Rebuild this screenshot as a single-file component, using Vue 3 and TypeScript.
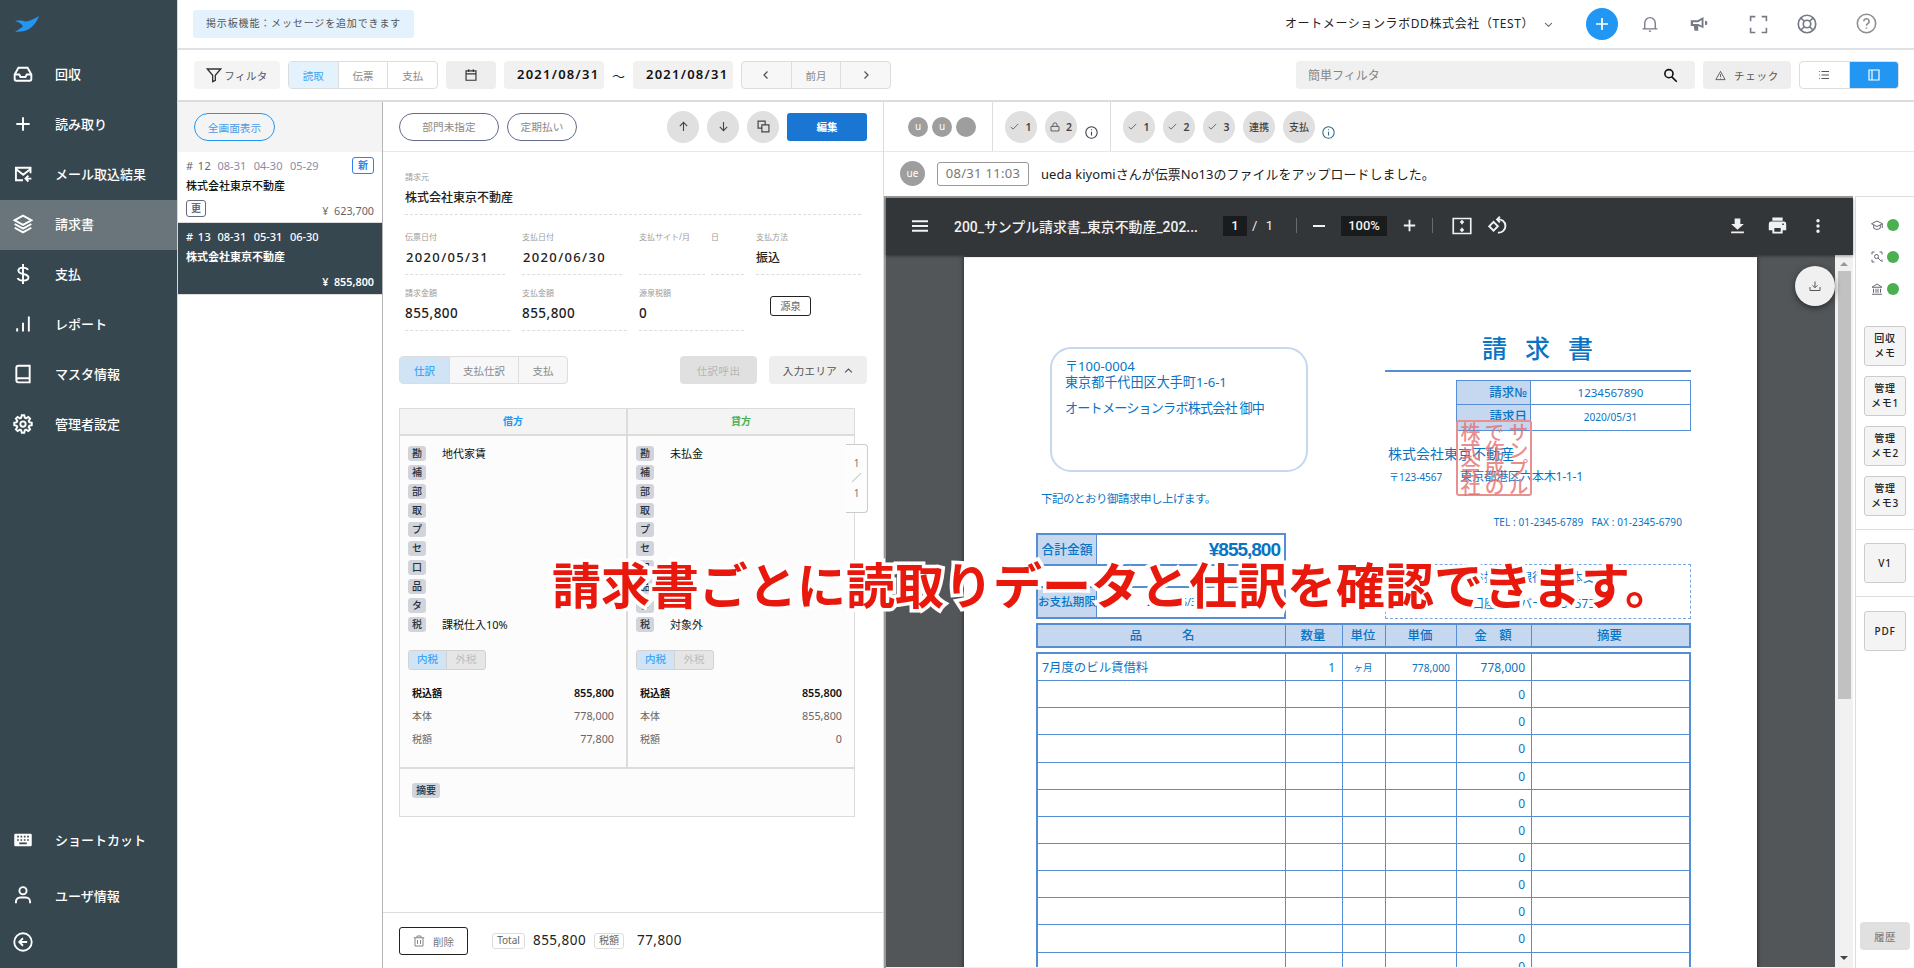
<script setup lang="ts">
import { h } from 'vue'

interface IconDef {
  d: string
  fill?: boolean
}

const icons: Record<string, IconDef> = {
  inbox: { d: 'M2 12.5h5.5l1.5 3h6l1.5-3H22M6.5 4.5h11L22 12.5V18a2 2 0 0 1-2 2H4a2 2 0 0 1-2-2v-5.500z' },
  plus: { d: 'M12 4v16M4 12h16' },
  mail: { d: 'M21 11V4.500H3.500V19.500H12M3.500 6l8.750 7L21 6M22 17.500h-6M18.500 14l-3.500 3.500 3.500 3.500' },
  layers: { d: 'M12 2l10 5.500-10 5.500L2 7.500zM2 12l10 5.500L22 12M2 16.500L12 22l10-5.500' },
  dollar: { d: 'M12 0v24M18 7C17 5 15 4.300 12 4.300c-3.500 0-5.500 1.300-5.500 3.700 0 5.300 12 2.700 12 8.200 0 2.300-2.500 3.700-6.500 3.700-3.500 0-5.500-1-6.500-3' },
  bars: { d: 'M5 21v-4M12 21V10.500M19 21V3' },
  book: { d: 'M20 17H6.500a2.500 2.500 0 0 0 0 5H20V2H6.500A2.500 2.500 0 0 0 4 4.500v15' },
  gear: { d: 'M12 8.800a3.200 3.200 0 1 0 0 6.400 3.200 3.200 0 0 0 0-6.400zM9.800 4.500L10.500 1.500h3l.7 3 1.500.7 2.700-1.700 2.100 2.100-1.700 2.700.7 1.500 3 .7v3l-3 .7-.7 1.500 1.700 2.700-2.100 2.100-2.700-1.700-1.500.7-.7 3h-3l-.7-3-1.500-.7-2.700 1.700-2.100-2.100 1.700-2.700-.7-1.500-3-.7v-3l3-.7.700-1.500L3.500 5.600l2.100-2.100 2.700 1.700z' },
  keyboard: { fill: true, d: 'M3 4.500h18a1.500 1.500 0 0 1 1.500 1.500v12a1.500 1.500 0 0 1-1.500 1.500H3A1.500 1.500 0 0 1 1.500 18V6A1.500 1.500 0 0 1 3 4.500zM5 7v2h2V7zm4 0v2h2V7zm4 0v2h2V7zm4 0v2h2V7zM5 11v2h2v-2zm4 0v2h2v-2zm4 0v2h2v-2zm4 0v2h2v-2zM7.500 15v2h9v-2z' },
  user: { d: 'M12 2.500a4.300 4.300 0 1 0 0 8.600 4.300 4.300 0 0 0 0-8.600zM3.500 22v-2a5 5 0 0 1 5-5h7a5 5 0 0 1 5 5v2' },
  back: { d: 'M12 1.500a10.500 10.500 0 1 0 0 21 10.500 10.500 0 0 0 0-21zM17 12H8M12 7.500L7.500 12l4.500 4.500' },
  funnel: { d: 'M2 3h20l-8 9.500V20l-4 2v-9.500z' },
  calendar: { d: 'M3.500 5h17v16h-17zM3.500 10h17M8 2v5M16 2v5' },
  left: { d: 'M15 5l-7 7 7 7' },
  right: { d: 'M9 5l7 7-7 7' },
  down: { d: 'M3 8l9 9 9-9' },
  up: { d: 'M3 17l9-9 9 9' },
  arrowUp: { d: 'M12 22V3M4 11l8-8 8 8' },
  arrowDown: { d: 'M12 2v19M4 13l8 8 8-8' },
  copy: { d: 'M9 9h13v13H9zM15 9V2H2v13h7' },
  bell: { d: 'M2 18.500h20M5 18V10.500a7 7 0 0 1 14 0V18M10.500 21.500h3' },
  horn: { fill: true, d: 'M1 7h9l8-4.500v15L11 14.500V21H6l-1-6.500H1zm3 2.500v2.500h7l4.500 2V6.500L11 9.500zM20 7.500l3 1v4l-3 1z' },
  expand: { d: 'M2 8V2h6M16 2h6v6M22 16v6h-6M8 22H2v-6' },
  ring: { d: 'M12 1.500a10.500 10.500 0 1 0 0 21 10.500 10.500 0 0 0 0-21zM12 7.500a4.500 4.500 0 1 0 0 9 4.500 4.500 0 0 0 0-9zM4.500 4.500L9 9M15 15l4.500 4.500M19.500 4.500L15 9M9 15l-4.500 4.500' },
  help: { d: 'M12 1.500a10.500 10.500 0 1 0 0 21 10.500 10.500 0 0 0 0-21zM9 9.500a3 3 0 1 1 4.300 2.700c-1 .5-1.300 1-1.300 2.300M12 16.500v1.500' },
  search: { d: 'M9.500 2.500a6.500 6.500 0 1 0 0 13 6.500 6.500 0 0 0 0-13zM14.500 14.500L22 22' },
  warn: { d: 'M12 3l10 18H2zM12 9v6M12 17v1.500' },
  list: { d: 'M7 5h15M7 12h15M7 19h15M2 5h1.500M2 12h1.500M2 19h1.500' },
  split: { d: 'M2 2h20v20H2zM8 2v20' },
  check: { d: 'M2 13l6 6L22 5' },
  lock: { d: 'M2.500 10.500h19v11h-19zM7 10V7a5 5 0 0 1 10 0v3' },
  info: { d: 'M12 1.500a10.500 10.500 0 1 0 0 21 10.500 10.500 0 0 0 0-21zM12 10.500v7M12 6v2' },
  trash: { d: 'M1.500 5.500h21M4 6v16h16V6M8 5V2h8v3M9 10v8M15 10v8' },
  menu: { fill: true, d: 'M0 3.500h24v3H0zM0 10.500h24v3H0zM0 17.500h24v3H0z' },
  fit: { d: 'M1.500 3h21v18h-21z M12 6v4M12 14v4M10 8l2-2 2 2M10 16l2 2 2-2' },
  rotate: { d: 'M7 7.500l5.500 5.500L7 18.500 1.500 13zM11.500 4.500c5.500-1 10.500 2.500 10.500 8 0 5-4 9-9.500 8.500M15 1l-3.500 3.500L15 8' },
  download: { fill: true, d: 'M8 2h8v8h5l-9 8-9-8h5zM3 20.500h18V23H3z' },
  print: { fill: true, d: 'M5.500 2h13v4h-13zM4 7h16a3 3 0 0 1 3 3v8h-4.500v4h-13v-4H1v-8a3 3 0 0 1 3-3zm4 8v5h8v-5zM18 9.500v2h2v-2z' },
  dots: { fill: true, d: 'M12 1.500a2.600 2.600 0 1 0 0 5.200 2.600 2.600 0 0 0 0-5.200zM12 9.400a2.600 2.600 0 1 0 0 5.200 2.600 2.600 0 0 0 0-5.200zM12 17.300a2.600 2.600 0 1 0 0 5.200 2.600 2.600 0 0 0 0-5.200z' },
  tray: { d: 'M2 14v7h20v-7M12 3v12M7 10.500l5 5 5-5' },
  cap: { d: 'M1 9.500l11-5.500 11 5.500-11 5.500zM5.500 12v6.500c4 3 9 3 13 0V12M22.500 10v8' },
  scan: { d: 'M2 7V2h5M17 2h5v5M7 22H2v-5M22 17v5M11 7a4 4 0 1 0 0 8 4 4 0 0 0 0-8zM14 14l6 6' },
  bank: { d: 'M2 8.500L12 2l10 6.500zM2 22.500h20M5 11.500v8M10 11.500v8M14 11.500v8M19 11.500v8' }
}

// Small icon renderer on a 24 unit grid
const Icon = (props: { name: string; size?: number; weight?: number }) => {
  const def = icons[props.name]
  const size = props.size ?? 16
  return h('svg', {
    viewBox: '0 0 24 24',
    width: size,
    height: size,
    fill: def.fill ? 'currentColor' : 'none',
    'fill-rule': 'evenodd',
    stroke: def.fill ? 'none' : 'currentColor',
    'stroke-width': props.weight ?? 2
  }, [h('path', { d: def.d })])
}
Icon.props = ['name', 'size', 'weight']

const menu = [
  { icon: 'inbox', label: '回収' },
  { icon: 'plus', label: '読み取り' },
  { icon: 'mail', label: 'メール取込結果' },
  { icon: 'layers', label: '請求書', active: true },
  { icon: 'dollar', label: '支払' },
  { icon: 'bars', label: 'レポート' },
  { icon: 'book', label: 'マスタ情報' },
  { icon: 'gear', label: '管理者設定' }
]

const slips = [
  { no: '12', dates: ['08-31', '04-30', '05-29'], name: '株式会社東京不動産', price: '623,700', isNew: true, updated: true },
  { no: '13', dates: ['08-31', '05-31', '06-30'], name: '株式会社東京不動産', price: '855,800', selected: true }
]

const tagNames = ['勘', '補', '部', '取', 'プ', 'セ', '口', '品', 'タ', '税']

const sides = [
  { account: '地代家賃', tax: '課税仕入10%', total: '855,800', base: '778,000', taxAmount: '77,800' },
  { account: '未払金', tax: '対象外', total: '855,800', base: '855,800', taxAmount: '0' }
]

const tagValue = (side: (typeof sides)[number], tag: string) => {
  if (tag === '勘') return side.account
  if (tag === '税') return side.tax
  return ''
}

const memos = [['回収', 'メモ'], ['管理', 'メモ1'], ['管理', 'メモ2'], ['管理', 'メモ3']]
const stampColumns = ['株式会社', 'で作成の', 'サンプル']
const emptyRows = 11
</script>

<template>
  <div class="app">
    <nav class="sidebar">
      <div class="logo">
        <svg width="26" height="18" viewBox="0 0 26 18">
          <path d="M25 1C22 9 16 16 7 16.500L1 17l8-5.500C8 9 5 7 1 6c5-1 8 0 11 .5C17 6 21 3 25 1z" fill="#2196f3" />
        </svg>
      </div>
      <a v-for="item in menu" :key="item.label" class="nav-item" :class="{ active: item.active }">
        <Icon :name="item.icon" :size="20" :weight="2.3" /><span>{{ item.label }}</span>
      </a>
      <div class="nav-bottom">
        <a class="nav-item shortcut"><Icon name="keyboard" :size="20" /><span>ショートカット</span></a>
        <a class="nav-item user"><Icon name="user" :size="20" :weight="2.3" /><span>ユーザ情報</span></a>
        <a class="nav-item fold"><Icon name="back" :size="20" :weight="2.2" /></a>
      </div>
    </nav>

    <div class="content">
      <header class="header">
        <div class="notice">掲示板機能：メッセージを追加できます</div>
        <div class="company">オートメーションラボDD株式会社（TEST）</div>
        <Icon class="company-arrow" name="down" :size="9" :weight="2.8" />
        <div class="add"><Icon name="plus" :size="18" :weight="2.3" /></div>
        <Icon class="h-bell" name="bell" :size="18" :weight="1.8" />
        <Icon class="h-horn" name="horn" :size="18" />
        <Icon class="h-expand" name="expand" :size="19" />
        <Icon class="h-ring" name="ring" :size="20" />
        <Icon class="h-help" name="help" :size="21" :weight="1.8" />
      </header>

      <div class="toolbar">
        <button class="btn filter"><Icon name="funnel" :size="16" />フィルタ</button>
        <div class="group">
          <button class="on">読取</button><button>伝票</button><button>支払</button>
        </div>
        <button class="btn cal"><Icon name="calendar" :size="14" /></button>
        <div class="date">2021/08/31</div>
        <span class="tilde">～</span>
        <div class="date">2021/08/31</div>
        <div class="group pager">
          <button><Icon name="left" :size="12" :weight="2.6" /></button><button>前月</button><button><Icon name="right" :size="12" :weight="2.6" /></button>
        </div>
        <div class="search"><span>簡単フィルタ</span><Icon name="search" :size="15" :weight="2.6" /></div>
        <button class="btn alert"><Icon name="warn" :size="11" />チェック</button>
        <div class="group view">
          <button><Icon name="list" :size="12" /></button><button class="primary"><Icon name="split" :size="12" :weight="2.400" /></button>
        </div>
      </div>

      <main class="main">
        <section class="slip-list">
          <div class="list-head"><button class="pill blue">全画面表示</button></div>
          <div v-for="slip in slips" :key="slip.no" class="slip" :class="{ selected: slip.selected }">
            <div class="slip-top">
              <span class="no"># {{ slip.no }}</span>
              <span v-for="date in slip.dates" :key="date" class="slip-date">{{ date }}</span>
              <span v-if="slip.isNew" class="mark new">新</span>
            </div>
            <div class="slip-name">{{ slip.name }}</div>
            <div class="slip-foot">
              <span v-if="slip.updated" class="mark">更</span>
              <span class="price">¥&nbsp; {{ slip.price }}</span>
            </div>
          </div>
        </section>

        <section class="detail">
          <div class="detail-head">
            <button class="pill dept">部門未指定</button>
            <button class="pill regular">定期払い</button>
            <div class="round first"><Icon name="arrowUp" :size="11" :weight="2.400" /></div>
            <div class="round"><Icon name="arrowDown" :size="11" :weight="2.400" /></div>
            <div class="round"><Icon name="copy" :size="13" :weight="2.200" /></div>
            <button class="edit">編集</button>
          </div>

          <div class="fields">
            <div class="field vendor"><label>請求元</label><b>株式会社東京不動産</b></div>
            <div class="field-row">
              <div class="field w100 ymd"><label>伝票日付</label><b>2020/05/31</b></div>
              <div class="field w100 ymd"><label>支払日付</label><b>2020/06/30</b></div>
              <div class="field w66"><label>支払サイト/月</label></div>
              <div class="field w33"><label>日</label></div>
              <div class="field w105"><label>支払方法</label><b>振込</b></div>
            </div>
            <div class="field-row second">
              <div class="field w105"><label>請求金額</label><b>855,800</b></div>
              <div class="field w105"><label>支払金額</label><b>855,800</b></div>
              <div class="field w105"><label>源泉税額</label><b>0</b></div>
              <button class="withhold">源泉</button>
            </div>
          </div>

          <div class="tabs">
            <div class="group journal">
              <button class="on">仕訳</button><button class="wide">支払仕訳</button><button>支払</button>
            </div>
            <button class="btn recall">仕訳呼出</button>
            <button class="btn area">入力エリア<Icon name="up" :size="9" :weight="3" /></button>
          </div>

          <div class="ledger">
            <div class="ledger-head"><span class="debit">借方</span><span class="credit">貸方</span></div>
            <div class="ledger-body">
              <div v-for="side in sides" :key="side.account" class="side">
                <div v-for="tag in tagNames" :key="tag" class="tag-row">
                  <span class="tag">{{ tag }}</span><span class="value">{{ tagValue(side, tag) }}</span>
                </div>
                <div class="tax-toggle"><span class="on">内税</span><span>外税</span></div>
                <div class="sum strong"><span>税込額</span><span>{{ side.total }}</span></div>
                <div class="sum"><span>本体</span><span>{{ side.base }}</span></div>
                <div class="sum"><span>税額</span><span>{{ side.taxAmount }}</span></div>
              </div>
            </div>
            <div class="ledger-foot"><span class="tag">摘要</span></div>
            <div class="page-tab"><span>1</span><span>／</span><span>1</span></div>
          </div>

          <div class="detail-foot">
            <button class="delete"><Icon name="trash" :size="12" :weight="1.800" />削除</button>
            <span class="chip total">Total</span><span class="amount">855,800</span>
            <span class="chip">税額</span><span class="amount tax">77,800</span>
          </div>
        </section>

        <section class="file">
          <div class="approval">
            <div class="users"><i>u</i><i>u</i><i></i></div>
            <div class="steps a">
              <div class="round"><Icon name="check" :size="9" />1</div>
              <div class="round"><Icon name="lock" :size="10" />2</div>
              <Icon class="info" name="info" :size="13" />
            </div>
            <div class="steps b">
              <div v-for="n in 3" :key="n" class="round"><Icon name="check" :size="9" />{{ n }}</div>
              <div class="round text">連携</div>
              <div class="round text">支払</div>
              <Icon class="info blue" name="info" :size="13" />
            </div>
          </div>
          <div class="log">
            <i>ue</i>
            <span class="time">08/31 11:03</span>
            <span>ueda kiyomiさんが伝票No13のファイルをアップロードしました。</span>
          </div>

          <div class="file-body">
            <div class="viewer">
              <div class="pdf-bar">
                <Icon name="menu" :size="16" />
                <span class="pdf-title">200_サンプル請求書_東京不動産_202...</span>
                <span class="box page-no">1</span><span class="pages">/&nbsp; 1</span>
                <s></s>
                <span class="minus"></span>
                <span class="box zoom">100%</span>
                <Icon class="zoom-in" name="plus" :size="17" :weight="2.600" />
                <s class="second"></s>
                <Icon class="fit" name="fit" :size="20" />
                <Icon class="rotate" name="rotate" :size="19" :weight="2.400" />
                <Icon class="dl" name="download" :size="17" />
                <Icon class="print" name="print" :size="19" />
                <Icon class="more" name="dots" :size="16" />
              </div>
              <div class="pdf-area">
                <div class="page">
                  <div class="inv-top">
                    <div>
                      <div class="address">
                        <p>〒100-0004</p>
                        <p>東京都千代田区大手町1-6-1</p>
                        <p class="to">オートメーションラボ株式会社 御中</p>
                      </div>
                      <p class="lead">下記のとおり御請求申し上げます。</p>
                    </div>
                    <div class="issuer">
                      <div class="inv-title">請求書</div>
                      <div class="inv-no">
                        <span class="th">請求№</span><span class="num">1234567890</span>
                        <span class="th">請求日</span><span>2020/05/31</span>
                      </div>
                      <p class="from">株式会社東京不動産</p>
                      <p class="from-addr"><span>〒123-4567</span>東京都港区六本木1-1-1</p>
                      <p class="tel">TEL : 01-2345-6789&nbsp;&nbsp; FAX : 01-2345-6790</p>
                      <div class="stamp">
                        <span v-for="column in stampColumns" :key="column">{{ column }}</span>
                      </div>
                    </div>
                  </div>
                  <div class="inv-mid">
                    <div>
                      <div class="pay sum-total"><span class="th">合計金額</span><b>¥855,800</b></div>
                      <div class="pay due"><span class="th">お支払期限</span><span class="due-date">2020/06/30</span></div>
                    </div>
                    <div class="bank">
                      <p>お振込先銀行 東京本支店</p>
                      <p>口座ナンバー 1234575</p>
                    </div>
                  </div>
                  <div class="grid head">
                    <span class="goods">品　　名</span><span>数量</span><span>単位</span><span>単価</span><span>金　額</span><span>摘要</span>
                  </div>
                  <div class="lines">
                    <div class="grid">
                      <span>7月度のビル賃借料</span><span class="r qty">1</span><span class="c">ヶ月</span><span class="r small">778,000</span><span class="r">778,000</span><span></span>
                    </div>
                    <div v-for="n in emptyRows" :key="n" class="grid">
                      <span></span><span></span><span></span><span></span><span class="r">0</span><span></span>
                    </div>
                  </div>
                </div>
                <div class="scroll"><em class="tri-up"></em><em class="thumb"></em><em class="tri-down"></em></div>
                <div class="fab"><Icon name="tray" :size="12" /></div>
              </div>
            </div>

            <aside class="rail">
              <div v-for="name in ['cap', 'scan', 'bank']" :key="name" class="state"><Icon :name="name" :size="12" /><i></i></div>
              <div class="memos">
                <button v-for="memo in memos" :key="memo.join('')" class="memo">{{ memo[0] }}<br>{{ memo[1] }}</button>
              </div>
              <div class="rail-box"><button class="memo">V1</button></div>
              <div class="rail-box last"><button class="memo">PDF</button></div>
              <button class="btn history">履歴</button>
            </aside>
          </div>
        </section>
      </main>
    </div>

    <div class="caption">請求書ごとに読取りデータと仕訳を確認できます。</div>
  </div>
</template>

<style>
body {
  margin: 0;
  overflow: hidden;
}
</style>

<style scoped>
.app {
  position: relative;
  display: flex;
  width: 1914px;
  height: 968px;
  overflow: hidden;
  background: #fff;
  color: #212121;
  font-family: "Noto Sans", "Noto Sans CJK JP", sans-serif;
  font-size: 12px;
}

.app * {
  box-sizing: border-box;
}

svg {
  display: block;
  flex: none;
}

p {
  margin: 0;
}

i {
  font-style: normal;
}

button {
  padding: 0;
  border: 0;
  font: inherit;
  color: inherit;
  background: none;
}

/* Sidebar */
.sidebar {
  display: flex;
  flex-direction: column;
  flex: none;
  width: 178px;
  background: #37474f;
  border-right: 1px solid #d5d9db;
  color: #fff;
}

.logo {
  height: 50px;
  padding: 15px 0 0 14px;
}

.nav-item {
  display: flex;
  align-items: center;
  gap: 22px;
  height: 50px;
  padding: 0 0 2px 13px;
  font-size: 13px;
  font-weight: 500;
}

.nav-item span {
  padding-bottom: 2px;
}

.nav-item.active {
  background: #69757a;
}

.nav-bottom {
  margin-top: auto;
  padding-bottom: 5px;
}

.nav-bottom .shortcut {
  height: 56px;
}

.nav-bottom .user {
  height: 54px;
}

.nav-bottom .user span {
  padding-top: 2px;
}

.nav-bottom .fold {
  height: 40px;
}

.content {
  display: flex;
  flex-direction: column;
  flex: 1;
}

/* Header */
.header {
  display: flex;
  align-items: center;
  height: 50px;
  padding: 0 43px 0 15px;
  border-bottom: 2px solid #dfe1e6;
  color: #757a85;
}

.notice {
  width: 221px;
  height: 28px;
  padding-left: 13px;
  border-radius: 3px;
  background: #e3f2fd;
  color: #555;
  font-size: 10px;
  line-height: 26px;
  letter-spacing: 0.85px;
}

.company {
  margin-left: auto;
  width: 250px;
  padding-bottom: 2px;
  color: #222;
  letter-spacing: 0.6px;
  white-space: nowrap;
}

.company-arrow {
  margin-left: 9px;
  color: #555;
}

.add {
  display: flex;
  align-items: center;
  justify-content: center;
  width: 32px;
  height: 32px;
  margin-left: 33px;
  border-radius: 50%;
  background: #2196f3;
  color: #fff;
}

.h-bell {
  margin-left: 23px;
}

.h-horn {
  margin-left: 31px;
}

.h-expand {
  margin-left: 41px;
}

.h-ring {
  margin-left: 29px;
}

.h-help {
  margin: -2px -6px 0 39px;
  color: #8e8e8e;
}

/* Toolbar */
.toolbar {
  display: flex;
  align-items: center;
  gap: 8px;
  height: 52px;
  padding: 0 15px 0 16px;
  border-bottom: 2px solid #dcdcdc;
}

.btn {
  display: flex;
  align-items: center;
  justify-content: center;
  height: 28px;
  border-radius: 4px;
  background: #f4f4f4;
  color: #555;
  font-size: 10.500px;
  letter-spacing: 0.4px;
}

.filter {
  width: 86px;
  gap: 2px;
}

.filter svg {
  color: #333;
}

.group {
  display: flex;
  width: 150px;
  height: 28px;
  overflow: hidden;
  border: 1px solid #ddd;
  border-radius: 4px;
}

.group button {
  display: flex;
  align-items: center;
  justify-content: center;
  flex: 1;
  color: #8a8a8a;
  font-size: 10.500px;
}

.group button + button {
  border-left: 1px solid #ddd;
}

.group .on {
  background: #e3f2fd;
  color: #42a5f5;
}

.group svg {
  color: #555;
}

.cal {
  width: 50px;
  background: #eee;
  color: #333;
}

.date {
  width: 100px;
  height: 28px;
  padding-left: 13px;
  border-radius: 4px;
  background: #f1f1f1;
  color: #111;
  font-size: 13px;
  font-weight: 600;
  line-height: 27px;
  letter-spacing: 1.250px;
  white-space: nowrap;
}

.tilde {
  width: 13px;
  font-size: 13px;
}

.pager {
  background: #f7f7f7;
}

.search {
  display: flex;
  align-items: center;
  justify-content: space-between;
  width: 399px;
  height: 28px;
  margin-left: auto;
  padding: 0 17px 0 12px;
  border-radius: 4px;
  background: #f0f0f0;
  color: #858585;
}

.search svg {
  color: #111;
}

.alert {
  width: 88px;
  gap: 8px;
  background: #eee;
  letter-spacing: 0.8px;
}

.view {
  width: 100px;
}

.group .primary {
  background: #2196f3;
}

.group .primary svg {
  color: #fff;
}

.main {
  display: flex;
  height: 866px;
}

/* Slip list */
.slip-list {
  width: 205px;
  border-right: 1px solid #b5b5b5;
}

.list-head {
  height: 50px;
  padding: 11px 16px;
  background: #f4f4f4;
}

.pill {
  width: 81px;
  height: 28px;
  border: 1px solid #656b8c;
  border-radius: 14px;
  color: #8a8a8a;
  font-size: 10.700px;
}

.pill.blue {
  border-color: #2196f3;
  color: #4d9be8;
}

.slip {
  height: 71px;
  padding: 4px 8px;
  border-bottom: 1px solid #ddd;
  font-size: 11px;
}

.slip-top {
  display: flex;
  align-items: center;
  gap: 7.500px;
  height: 18px;
  color: #8a8ca5;
  font-size: 11px;
}

.slip-top .no {
  width: 24px;
  color: #666;
  letter-spacing: 0.4px;
  word-spacing: 1px;
  white-space: nowrap;
}

.mark {
  width: 20px;
  height: 17px;
  border: 1px solid #656b7c;
  border-radius: 3px;
  color: #656b7c;
  font-size: 10px;
  font-weight: 700;
  line-height: 14px;
  text-align: center;
}

.mark.new {
  width: 22px;
  margin-left: auto;
  border-color: #2f80f0;
  color: #2f80f0;
}

.slip-name {
  height: 26px;
  color: #111;
  font-weight: 500;
  line-height: 24px;
}

.slip-foot {
  display: flex;
  align-items: center;
  height: 17px;
  color: #666;
}

.price {
  margin-left: auto;
  font-size: 10.800px;
  padding-top: 3px;
}

.slip.selected {
  height: 72px;
  background: #37474f;
}

.slip.selected * {
  color: #fff;
  font-weight: 600;
}

.slip.selected .slip-date,
.slip.selected .no {
  font-weight: 500;
}

/* Detail */
.detail {
  display: flex;
  flex-direction: column;
  width: 501px;
  border-right: 1px solid #ddd;
}

.detail-head {
  display: flex;
  align-items: center;
  gap: 8px;
  height: 50px;
  padding: 0 16px;
  border-bottom: 1px solid #e8e8e8;
}

.dept {
  width: 100px;
}

.regular {
  width: 70px;
}

.round {
  display: flex;
  align-items: center;
  justify-content: center;
  gap: 6px;
  width: 32px;
  height: 32px;
  border-radius: 50%;
  background: #e0e0e0;
  color: #444;
  font-size: 10.500px;
  font-weight: 600;
}

.round.first {
  margin-left: auto;
}

.edit {
  width: 80px;
  height: 28px;
  border-radius: 3px;
  background: #1976d2;
  color: #fff;
  font-size: 10.500px;
  font-weight: 700;
}

.fields {
  padding: 17px 22px 0;
}

.field {
  display: flex;
  flex-direction: column;
  height: 46px;
  border-bottom: 1px dashed #ddd;
}

.field label {
  height: 17px;
  color: #9b9b9b;
  font-size: 8px;
  line-height: 16px;
  white-space: nowrap;
}

.field b {
  font-size: 12px;
  font-weight: 500;
  line-height: 23px;
  letter-spacing: 0;
}

.field.ymd b {
  padding-left: 1px;
  font-size: 13px;
  line-height: 22px;
  letter-spacing: 1.350px;
}

.field-row {
  display: flex;
  height: 60px;
  align-items: flex-end;
}

.field-row.second {
  height: 56px;
}

.field-row.second b {
  font-size: 13.500px;
  line-height: 22px;
  letter-spacing: 0.450px;
}

.w100 {
  width: 100px;
  margin-right: 17px;
}

.w66 {
  width: 66px;
  margin-right: 6px;
}

.w33 {
  width: 33px;
  margin-right: 12px;
}

.w105 {
  width: 105px;
}

.second .w105 {
  margin-right: 12px;
}

.withhold {
  width: 41px;
  height: 20px;
  margin: 0 0 15px 14px;
  border: 1px solid #222;
  border-radius: 3px;
  color: #666;
  font-size: 10.300px;
  line-height: 16px;
}

.tabs {
  display: flex;
  gap: 20px;
  margin-top: 25px;
  padding: 0 16px;
}

.journal {
  width: 169px;
  margin-right: auto;
  background: #f7f7f7;
}

.journal button {
  flex: none;
  width: 49px;
}

.journal .wide {
  width: 69px;
}

.journal .on,
.tax-toggle .on {
  background: #d0e4f5;
  color: #42a5f5;
  font-weight: 500;
}

.recall {
  width: 77px;
  margin-right: 0;
  background: #e0e0e0;
  color: #b5b5b5;
}

.area {
  width: 98px;
  margin-left: -8px;
  gap: 7px;
  background: #eee;
}

.ledger {
  position: relative;
  width: 456px;
  height: 409px;
  margin: 24px 0 0 16px;
  border: 1px solid #dcdcdc;
  background: #fcfcfc;
}

.ledger-head {
  display: flex;
  height: 27px;
  border-bottom: 2px solid #dcdcdc;
  background: #f4f4f4;
  font-size: 10px;
  font-weight: 700;
  line-height: 24px;
  text-align: center;
}

.ledger-head span {
  flex: 1;
}

.debit {
  border-right: 1px solid #dcdcdc;
  color: #2196f3;
}

.credit {
  border-left: 1px solid #dcdcdc;
  color: #4caf50;
}

.ledger-body {
  display: flex;
  height: 333px;
  border-bottom: 2px solid #dcdcdc;
}

.side {
  flex: 1;
  padding: 8px 12px 0 8px;
}

.side:first-child {
  border-right: 2px solid #dcdcdc;
}

.tag-row {
  display: flex;
  align-items: center;
  gap: 16px;
  height: 19px;
  color: #111;
  font-size: 11px;
}

.value {
  padding-bottom: 2px;
}

.tag {
  width: 18px;
  height: 15px;
  border-radius: 3px;
  background: #d1d5db;
  color: #263040;
  font-size: 10px;
  font-weight: 500;
  line-height: 14px;
  text-align: center;
}

.tax-toggle {
  display: flex;
  width: 78px;
  height: 20px;
  margin: 16px 0 11px;
  overflow: hidden;
  border: 1px solid #d2d2d2;
  border-radius: 3px;
  background: #e6e6e6;
  color: #bdbdbd;
  font-size: 10.500px;
  line-height: 17px;
  text-align: center;
}

.tax-toggle span {
  flex: 1;
}

.tax-toggle .on {
  flex: none;
  width: 38px;
  border-right: 1px solid #d2d2d2;
}

.sum {
  display: flex;
  align-items: center;
  justify-content: space-between;
  height: 23px;
  padding-left: 4px;
  color: #666;
  font-size: 10px;
}

.sum span + span {
  font-size: 10.800px;
}

.sum.strong {
  color: #111;
  font-weight: 600;
}

.ledger-foot {
  display: flex;
  padding: 14px 12px;
}

.ledger-foot .tag {
  width: 28px;
}

/* Sticks out over the right edge of the ledger */
.page-tab {
  position: absolute;
  top: 35px;
  right: -14px;
  width: 22px;
  height: 69px;
  padding-top: 11px;
  border: 1px solid #ccc;
  border-left: 0;
  border-radius: 0 4px 4px 0;
  background: #fdfdfd;
  color: #777;
  font-size: 10px;
  line-height: 15px;
}

.page-tab span {
  display: block;
  text-align: center;
}

.detail-foot {
  display: flex;
  align-items: center;
  height: 56px;
  margin-top: auto;
  padding: 1px 16px 0;
  border-top: 1px solid #ddd;
}

.delete {
  display: flex;
  align-items: center;
  justify-content: center;
  gap: 8px;
  width: 69px;
  height: 28px;
  margin-right: 24px;
  border: 1px solid #222;
  border-radius: 3px;
  color: #777;
  font-size: 10.500px;
}

.chip {
  width: 30px;
  height: 16px;
  border: 1px solid #ddd;
  border-radius: 3px;
  color: #666;
  font-size: 10px;
  line-height: 13px;
  text-align: center;
}

.chip.total {
  width: 33px;
}

.amount {
  width: 61px;
  padding: 0 0 2px 8px;
  font-size: 13.500px;
  letter-spacing: 0.450px;
}

.amount + .chip {
  margin-left: 8px;
}

.amount.tax {
  padding-left: 13px;
}

/* File column */
.file {
  display: flex;
  flex-direction: column;
  flex: 1;
}

.approval {
  display: flex;
  height: 50px;
  border-bottom: 1px solid #e8e8e8;
}

.users {
  display: flex;
  align-items: center;
  gap: 4px;
  width: 109px;
  padding-left: 24px;
  border-right: 1px solid #ddd;
}

.users i {
  width: 20px;
  height: 20px;
  border-radius: 50%;
  background: #9e9e9e;
  color: #fff;
  font-size: 10px;
  line-height: 19px;
  text-align: center;
}

.steps {
  display: flex;
  align-items: center;
  gap: 8px;
  padding-left: 12px;
}

.steps.a {
  width: 118px;
  border-right: 1px solid #ddd;
}

.round.text {
  font-weight: 500;
  font-size: 10px;
}

.info {
  margin-top: 11px;
  color: #3d3d55;
}

.info.blue {
  margin-left: -1px;
  color: #356a85;
}

.log {
  display: flex;
  align-items: center;
  gap: 12px;
  height: 44px;
  padding: 0 16px 1px;
  font-size: 12.950px;
  letter-spacing: 0.070px;
}

.log i {
  width: 25px;
  height: 25px;
  border-radius: 50%;
  background: #9e9e9e;
  color: #fff;
  font-size: 10px;
  line-height: 24px;
  text-align: center;
}

.time {
  width: 92px;
  height: 24px;
  border: 1px solid #999;
  border-radius: 3px;
  color: #777;
  font-size: 13px;
  line-height: 20px;
  letter-spacing: 0.3px;
  text-align: center;
}

.file-body {
  display: flex;
  flex: 1;
  min-height: 0;
}

.viewer {
  display: flex;
  flex-direction: column;
  width: 969px;
  border: solid #999;
  border-width: 2px 0 0 2px;
}

.pdf-bar {
  display: flex;
  align-items: center;
  flex: none;
  z-index: 1;
  height: 57px;
  padding: 0 27px 2px 26px;
  background: #323639;
  box-shadow: 0 1px 3px rgba(0, 0, 0, 0.4);
  color: #f1f1f1;
  font-family: Roboto, "Noto Sans CJK JP", sans-serif;
  font-size: 13px;
}

.pdf-title {
  width: 243px;
  margin: 0 26px;
  font-size: 13.900px;
  font-weight: 500;
  white-space: nowrap;
}

.box {
  height: 20px;
  background: #191b1c;
  font-weight: 500;
  line-height: 20px;
  text-align: center;
}

.page-no {
  width: 24px;
}

.pages {
  width: 49px;
  padding-left: 5px;
  word-spacing: 1px;
}

.pdf-bar s {
  width: 1px;
  height: 15px;
  background: #686b6d;
}

.minus {
  width: 12px;
  height: 2px;
  margin: 0 16px;
  background: #f1f1f1;
}

.zoom {
  width: 46px;
}

.zoom-in {
  margin: 0 14px;
}

.fit {
  margin: 0 16px 0 19px;
}

.dl {
  margin-left: auto;
}

.print {
  margin: 0 23px 0 22px;
}

.pdf-area {
  position: relative;
  display: flex;
  flex: 1;
  min-height: 0;
  overflow: hidden;
  border-bottom: 1px solid #eee;
  background: #525659;
}

.page {
  width: 793px;
  height: 900px;
  margin: 2px 78px 0 78px;
  padding: 0 66px 0 72px;
  background: #fff;
  box-shadow: 0 0 4px #222;
  color: #0a74c4;
}

.inv-top {
  display: grid;
  grid-template-columns: 349px 306px;
  height: 276px;
}

.address {
  width: 258px;
  height: 125px;
  margin: 90px 0 0 14px;
  padding: 9px 13px;
  border: 2px solid #c5d8f0;
  border-radius: 21px;
  font-size: 13.100px;
  line-height: 16px;
}

.address .to {
  margin-top: 10px;
  letter-spacing: -0.800px;
}

.lead {
  margin: 18px 0 0 5px;
  font-size: 11.500px;
  letter-spacing: -0.500px;
}

.issuer {
  position: relative;
}

.inv-title {
  height: 115px;
  padding: 74px 0 0 97px;
  border-bottom: 2px solid #558ed5;
  font-size: 25px;
  font-weight: 500;
  line-height: 34px;
  letter-spacing: 18px;
}

.inv-no {
  display: grid;
  grid-template-columns: 74px 1fr;
  grid-template-rows: 24px 25px;
  margin: 8px 0 0 71px;
  border: 1px solid #558ed5;
  font-size: 10.100px;
  line-height: 24px;
  text-align: center;
}

.inv-no .num {
  font-size: 11.500px;
}

.inv-no .th {
  padding-right: 3px;
  border-right: 1px solid #558ed5;
  font-size: 12.500px;
  text-align: right;
}

.inv-no :nth-child(-n + 2) {
  border-bottom: 1px solid #558ed5;
}

.th {
  background: #c5d8f0;
  font-weight: 500;
}

.from {
  margin: 15px 0 0 3px;
  font-size: 14px;
  line-height: 16px;
}

.from-addr {
  display: flex;
  align-items: center;
  margin: 7px 0 0 4px;
  font-size: 12.300px;
  line-height: 16px;
  letter-spacing: -0.350px;
}

.from-addr span {
  width: 71px;
  font-size: 10px;
  letter-spacing: 0;
}

.tel {
  margin: 29px 9px 0 0;
  font-size: 10px;
  line-height: 16px;
  text-align: right;
  letter-spacing: 0.1px;
}

/* Seal printed across the issuer block */
.stamp {
  position: absolute;
  top: 163px;
  left: 71px;
  display: flex;
  justify-content: space-around;
  width: 76px;
  height: 76px;
  border: 2px solid #e8908f;
  border-radius: 3px;
  color: rgba(228, 110, 108, 0.8);
  font-family: "Noto Sans CJK JP", sans-serif;
  font-size: 20px;
  font-weight: 500;
}

.stamp span {
  writing-mode: vertical-rl;
  width: 22px;
  height: 72px;
  line-height: 22px;
  letter-spacing: -2px;
  white-space: nowrap;
}

.inv-mid {
  display: grid;
  grid-template-columns: 349px 306px;
  height: 90px;
}

.pay {
  display: grid;
  grid-template-columns: 59px 1fr;
  width: 250px;
  height: 33px;
  border: 2px solid #558ed5;
}

.pay .th {
  border-right: 1px solid #558ed5;
  font-size: 12.800px;
  line-height: 28px;
  text-align: center;
  white-space: nowrap;
}

.pay b {
  padding-right: 4px;
  font-family: "Liberation Sans", sans-serif;
  font-size: 19px;
  letter-spacing: -1px;
  line-height: 29px;
  text-align: right;
}

.due {
  margin-top: 20px;
}

.due .th {
  font-size: 11.600px;
}

.due-date {
  padding-left: 50px;
  font-size: 10.500px;
  line-height: 28px;
}

.bank {
  height: 55px;
  margin-top: 31px;
  padding: 4px 0 0 86px;
  border: 1px dashed #7aa5dd;
  font-size: 12px;
  line-height: 17px;
}

.bank p + p {
  margin-top: 9px;
}

.grid {
  display: grid;
  grid-template-columns: 248px 57px 43px 71px 75px 1fr;
  height: 27.150px;
  font-size: 12.400px;
  line-height: 27px;
}

.grid span {
  padding: 0 6px 0 4px;
  border-right: 1px solid #558ed5;
  white-space: nowrap;
}

.grid span:last-child {
  border-right: 0;
}

.grid.head {
  height: 25px;
  border: 2px solid #558ed5;
  background: #c5d8f0;
  font-weight: 500;
  line-height: 21px;
  text-align: center;
}

.head .goods {
  padding-left: 12px;
  letter-spacing: 5px;
}

.lines {
  margin-top: 4px;
  border: 2px solid #558ed5;
}

.lines .grid {
  border-bottom: 1px solid #558ed5;
}

.lines .r {
  text-align: right;
  font-size: 12px;
}

.lines .small {
  font-size: 10.300px;
  padding-right: 6px;
  padding-top: 1px;
}

.lines .qty {
  padding-right: 7px;
}

.lines .c {
  text-align: center;
  font-size: 9.500px;
}

.scroll {
  display: flex;
  flex-direction: column;
  align-items: center;
  width: 18px;
  background: #f1f1f1;
}

.tri-up,
.tri-down {
  flex: none;
  margin-top: 7px;
  border: solid transparent;
  border-width: 0 4px 4px;
  border-bottom-color: #999;
}

.thumb {
  width: 13px;
  height: 428px;
  margin-top: 5px;
  background: #c1c1c1;
}

.tri-down {
  margin: auto 0 7px;
  border-width: 4px 4px 0;
  border-top-color: #444;
}

/* Floating download button */
.fab {
  position: absolute;
  top: 11px;
  right: 18px;
  display: flex;
  align-items: center;
  justify-content: center;
  width: 40px;
  height: 40px;
  border-radius: 50%;
  background: #f0f0f0;
  box-shadow: 0 2px 6px rgba(0, 0, 0, 0.5);
  color: #555;
}

.rail {
  display: flex;
  flex-direction: column;
  flex: 1;
  margin-left: 2px;
  padding-top: 12px;
  border: solid #ddd;
  border-width: 1px 0 0 1px;
}

.state {
  display: flex;
  align-items: center;
  gap: 4px;
  height: 32px;
  padding-left: 15px;
  color: #667;
}

.state i {
  width: 12px;
  height: 12px;
  border-radius: 50%;
  background: #4caf50;
}

.memos {
  display: flex;
  flex-direction: column;
  align-items: flex-start;
  gap: 10px;
  height: 224px;
  padding: 21px 0 0 8px;
}

.memo {
  width: 42px;
  height: 40px;
  border: 1px solid #ccc;
  border-radius: 3px;
  background: #f4f4f4;
  color: #222;
  font-size: 10px;
  font-weight: 500;
  line-height: 15px;
  letter-spacing: 0.7px;
}

.rail-box {
  height: 67px;
  padding: 13px 0 0 8px;
  border-top: 1px solid #ddd;
}

.rail-box.last {
  padding-top: 14px;
}

.history {
  width: 50px;
  margin: auto 0 18px 4px;
  background: #e0e0e0;
  color: #777;
}

/* Caption laid over the whole screen */
.caption {
  position: absolute;
  top: 548px;
  left: 552px;
  color: #e8190c;
  font-family: "Noto Sans CJK JP", sans-serif;
  font-size: 49px;
  font-weight: 700;
  line-height: 70px;
  white-space: nowrap;
  paint-order: stroke fill;
  -webkit-text-stroke: 7px #fff;
}
</style>
